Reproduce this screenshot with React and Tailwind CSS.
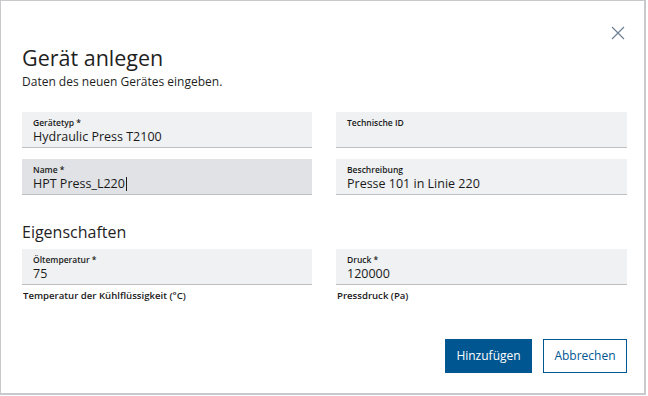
import React from 'react';

const Field = ({ label, value, active, caret }) => (
  <div
    className={`h-[36px] border-b border-[#bfc0c2] px-[11px] pt-[5px] ${active ? 'bg-[#e0e2e5]' : 'bg-[#eff1f2]'}`}
  >
    <div className="text-[8.5px] font-semibold leading-[11px] text-[#1a1a1a]">{label}</div>
    <div className="flex items-center text-[12.5px] leading-[17px] text-[#1a1a1a]">
      {value}
      {caret && <span className="ml-[1px] inline-block h-[14px] w-px bg-[#1a1a1a]" />}
    </div>
  </div>
);

const Helper = ({ children }) => (
  <div className="mt-[5px] px-[1px] text-[9.6px] font-semibold leading-[12px] text-[#1a1a1a]">{children}</div>
);

export default function App() {
  return (
    <div className="h-[396px] w-[648px] bg-white" style={{ fontFamily: '"Open Sans", "Noto Sans", sans-serif' }}>
      <div className="relative h-[395px] w-[646px] border border-b-2 border-r-2 border-[#c8c9cc] bg-white">
        <button className="absolute right-[19px] top-[25px] text-[#6d7f96]">
          <svg width="14" height="14" viewBox="0 0 14 14" fill="none" stroke="currentColor" strokeWidth="1.2">
            <path d="M1 1l12 12M13 1L1 13" />
          </svg>
        </button>

        <div className="pl-[21px] pr-[17px] pt-[43px]">
          <h1 className="text-[21.5px] font-normal leading-[28px] text-[#1f1f1f]">Gerät anlegen</h1>
          <p className="mt-[2px] text-[12px] leading-[16px] text-[#1f1f1f]">Daten des neuen Gerätes eingeben.</p>

          <div className="mt-[22px] grid grid-cols-[290px_291px] gap-x-[24px] gap-y-[11px]">
            <Field label="Gerätetyp *" value="Hydraulic Press T2100" />
            <Field label="Technische ID" value="" />
            <Field label="Name *" value="HPT Press_L220" active caret />
            <Field label="Beschreibung" value="Presse 101 in Linie 220" />
          </div>

          <h2 className="mt-[26px] text-[16px] font-normal leading-[22px] text-[#1f1f1f]">Eigenschaften</h2>

          <div className="mt-[6px] grid grid-cols-[290px_291px] gap-x-[24px]">
            <div>
              <Field label="Öltemperatur *" value="75" />
              <Helper>Temperatur der Kühlflüssigkeit (°C)</Helper>
            </div>
            <div>
              <Field label="Druck *" value="120000" />
              <Helper>Pressdruck (Pa)</Helper>
            </div>
          </div>

          <div className="mt-[37px] flex justify-end gap-[11px]">
            <button className="h-[34px] w-[87px] bg-[#005691] text-[12px] font-medium text-white">Hinzufügen</button>
            <button className="h-[34px] w-[84px] border border-[#005691] bg-white text-[12px] font-medium text-[#005691]">
              Abbrechen
            </button>
          </div>
        </div>
      </div>
    </div>
  );
}
